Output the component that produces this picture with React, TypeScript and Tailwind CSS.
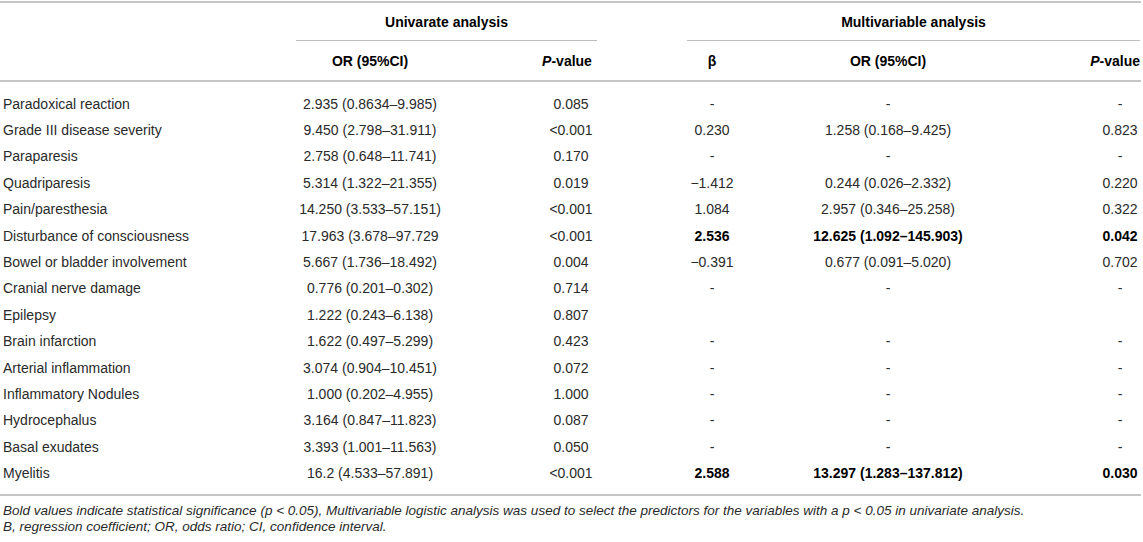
import React from "react";

type Row = {
  label: string;
  or1: string;
  p1: string;
  b?: string;
  or2?: string;
  p2?: string;
  bold?: boolean;
};

const rows: Row[] = [
  { label: "Paradoxical reaction", or1: "2.935 (0.8634–9.985)", p1: "0.085", b: "-", or2: "-", p2: "-" },
  { label: "Grade III disease severity", or1: "9.450 (2.798–31.911)", p1: "<0.001", b: "0.230", or2: "1.258 (0.168–9.425)", p2: "0.823" },
  { label: "Paraparesis", or1: "2.758 (0.648–11.741)", p1: "0.170", b: "-", or2: "-", p2: "-" },
  { label: "Quadriparesis", or1: "5.314 (1.322–21.355)", p1: "0.019", b: "−1.412", or2: "0.244 (0.026–2.332)", p2: "0.220" },
  { label: "Pain/paresthesia", or1: "14.250 (3.533–57.151)", p1: "<0.001", b: "1.084", or2: "2.957 (0.346–25.258)", p2: "0.322" },
  { label: "Disturbance of consciousness", or1: "17.963 (3.678–97.729", p1: "<0.001", b: "2.536", or2: "12.625 (1.092–145.903)", p2: "0.042", bold: true },
  { label: "Bowel or bladder involvement", or1: "5.667 (1.736–18.492)", p1: "0.004", b: "−0.391", or2: "0.677 (0.091–5.020)", p2: "0.702" },
  { label: "Cranial nerve damage", or1: "0.776 (0.201–0.302)", p1: "0.714", b: "-", or2: "-", p2: "-" },
  { label: "Epilepsy", or1: "1.222 (0.243–6.138)", p1: "0.807", b: "", or2: "", p2: "" },
  { label: "Brain infarction", or1: "1.622 (0.497–5.299)", p1: "0.423", b: "-", or2: "-", p2: "-" },
  { label: "Arterial inflammation", or1: "3.074 (0.904–10.451)", p1: "0.072", b: "-", or2: "-", p2: "-" },
  { label: "Inflammatory Nodules", or1: "1.000 (0.202–4.955)", p1: "1.000", b: "-", or2: "-", p2: "-" },
  { label: "Hydrocephalus", or1: "3.164 (0.847–11.823)", p1: "0.087", b: "-", or2: "-", p2: "-" },
  { label: "Basal exudates", or1: "3.393 (1.001–11.563)", p1: "0.050", b: "-", or2: "-", p2: "-" },
  { label: "Myelitis", or1: "16.2 (4.533–57.891)", p1: "<0.001", b: "2.588", or2: "13.297 (1.283–137.812)", p2: "0.030", bold: true },
];

const cols = "grid grid-cols-[285px_170px_232px_50px_302px_102px]";

export default function App() {
  return (
    <div
      className="w-[1143px] h-[542px] bg-white text-[14px] text-[#2a2a2a] overflow-hidden"
      style={{ fontFamily: '"Liberation Sans", Arial, sans-serif' }}
    >
      <div className="w-[1141px] pt-[1px]">
        <div className="border-t-2 border-[#c6c6c6]" />
        {/* group header row */}
        <div className={`${cols} h-[38px] font-bold text-black`}>
          <div />
          <div className="col-span-2 ml-[11px] mr-[90px] flex items-center justify-center border-b border-[#bdbdbd] pt-[1px]">
            Univarate analysis
          </div>
          <div className="col-span-3 mr-[1px] flex items-center justify-center border-b border-[#bdbdbd] pt-[1px]">
            Multivariable analysis
          </div>
        </div>
        {/* column header row */}
        <div className={`${cols} h-[41px] font-bold text-black border-b-2 border-[#c6c6c6]`}>
          <div />
          <div className="flex items-center justify-center pt-[1px]">OR (95%CI)</div>
          <div className="flex items-center justify-center pr-[8px] pt-[1px]">
            <span>
              <i>P</i>-value
            </span>
          </div>
          <div className="flex items-center justify-center pt-[1px]">β</div>
          <div className="flex items-center justify-center pt-[1px]">OR (95%CI)</div>
          <div className="flex items-center justify-end pr-[1px] pt-[1px]">
            <span>
              <i>P</i>-value
            </span>
          </div>
        </div>
        {/* body */}
        <div className="pt-[9px] pb-[7px] border-b-2 border-[#c6c6c6]">
          {rows.map((r) => (
            <div key={r.label} className={`${cols} h-[26.4px] items-center`}>
              <div className="pl-[3px] whitespace-nowrap">{r.label}</div>
              <div className="flex justify-center whitespace-nowrap">{r.or1}</div>
              <div className="flex justify-center whitespace-nowrap">{r.p1}</div>
              <div className={`flex justify-center whitespace-nowrap ${r.bold ? "font-bold text-black" : ""}`}>{r.b}</div>
              <div className={`flex justify-center whitespace-nowrap ${r.bold ? "font-bold text-black" : ""}`}>{r.or2}</div>
              <div className="flex justify-end pr-[1px]">
                <div className={`w-[40px] text-center whitespace-nowrap ${r.bold ? "font-bold text-black" : ""}`}>{r.p2}</div>
              </div>
            </div>
          ))}
        </div>
        {/* footnote */}
        <div className="pt-[7px] pl-[3px] text-[13.5px] leading-[16px] italic text-[#2a2a2a]">
          <div className="whitespace-nowrap">
            Bold values indicate statistical significance (p &lt; 0.05), Multivariable logistic analysis was used to select the predictors for the variables with a p &lt; 0.05 in univariate analysis.
          </div>
          <div className="whitespace-nowrap">B, regression coefficient; OR, odds ratio; CI, confidence interval.</div>
        </div>
      </div>
    </div>
  );
}
